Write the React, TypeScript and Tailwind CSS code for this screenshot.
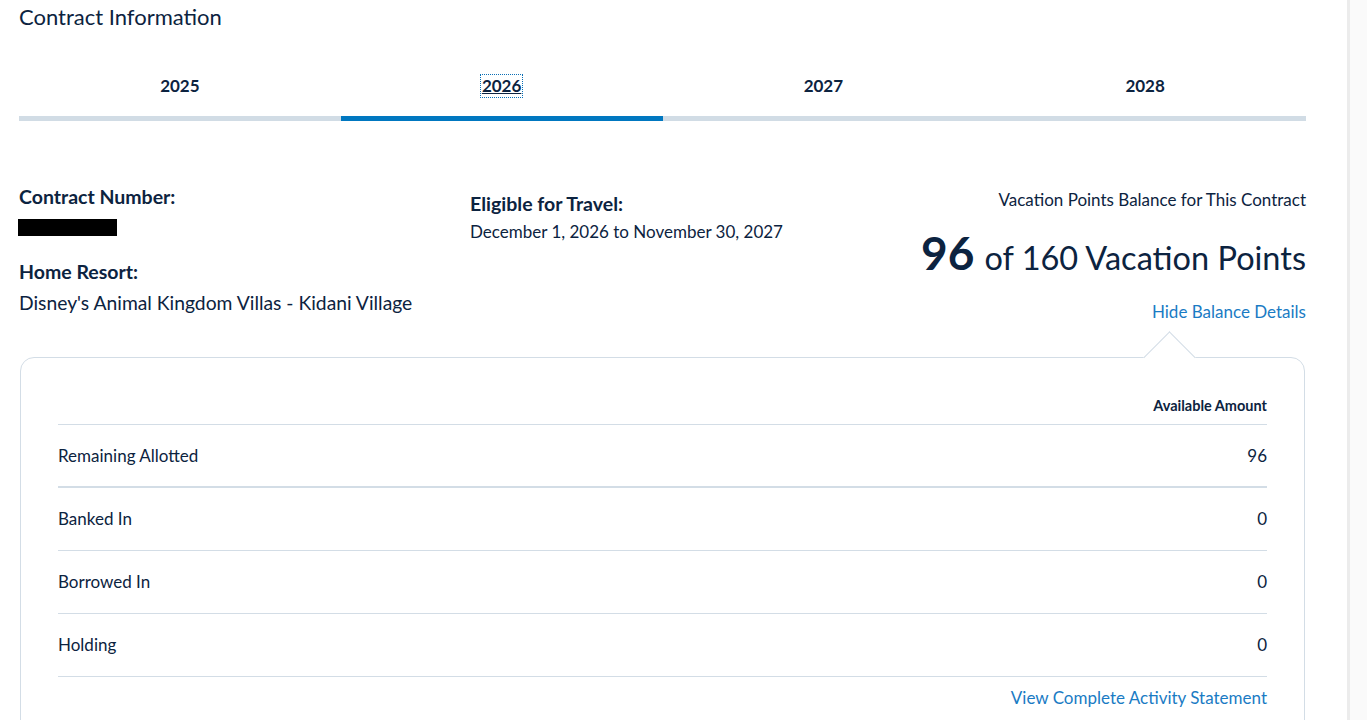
import React from 'react';

const YEARS = ['2025', '2026', '2027', '2028'];

const ROWS = [
    { label: 'Remaining Allotted', value: '96' },
    { label: 'Banked In', value: '0' },
    { label: 'Borrowed In', value: '0' },
    { label: 'Holding', value: '0' },
];

function YearTabs({ active }: { active: string }) {
    return (
        <div className="grid grid-cols-4 mt-[22px]">
            {YEARS.map((year) => {
                const isActive = year === active;
                return (
                    <div key={year} className="flex flex-col">
                        <div className="h-[60px] flex items-center justify-center">
                            <span
                                className={`text-[17px] font-bold leading-[22px] px-[1px] ${
                                    isActive ? 'underline outline-1 outline-dotted outline-[#0a6fb5]' : ''
                                }`}
                            >
                                {year}
                            </span>
                        </div>
                        <div className={`h-[5px] ${isActive ? 'bg-[#0077c0]' : 'bg-[#d1dce5]'}`} />
                    </div>
                );
            })}
        </div>
    );
}

function BalanceCard() {
    return (
        <div className="relative mt-[33px] mx-[1px] border border-[#d3dde6] rounded-[14px] bg-white px-[37px] pt-[38px] pb-[30px]">
            {/* pointer notch under "Hide Balance Details" */}
            <div className="absolute -top-[19px] right-[116px] w-[37px] h-[37px] rotate-45 bg-white border-t border-l border-[#d3dde6]" />
            <div className="relative flex justify-end pb-[8px] border-b border-[#d3dde6]">
                <span className="text-[14.5px] font-bold leading-[20px]">Available Amount</span>
            </div>
            {ROWS.map((row, i) => (
                <div
                    key={row.label}
                    className={`flex items-center justify-between h-[63px] border-[#d3dde6] ${
                        i === 0 ? 'border-b-2' : 'border-b'
                    }`}
                >
                    <span className="text-[17px]">{row.label}</span>
                    <span className="text-[17px]">{row.value}</span>
                </div>
            ))}
            <div className="flex justify-end pt-[9px]">
                <a className="text-[17px] text-[#1a7bc4] leading-[24px]">View Complete Activity Statement</a>
            </div>
        </div>
    );
}

export default function App() {
    return (
        <div
            className="min-h-[720px] bg-[#fafafa] flex text-[#0c2340]"
            style={{ fontFamily: 'Lato, "Noto Sans", sans-serif' }}
        >
            <div className="w-[1350px] bg-white border-r-[3px] border-[#ececec]">
                <div className="w-[1287px] ml-[19px]">
                    <h1 className="text-[22px] leading-[34px] font-normal">Contract Information</h1>

                    <YearTabs active="2026" />

                    <div className="flex mt-[63px]">
                        <div className="w-[451px] flex flex-col">
                            <span className="text-[19.5px] font-bold leading-[26px]">Contract Number:</span>
                            <div className="mt-[9px] -ml-[1px] w-[99px] h-[17px] bg-black" />
                            <span className="mt-[23px] text-[19.5px] font-bold leading-[26px]">Home Resort:</span>
                            <span className="mt-[5px] text-[19.3px] leading-[26px]">
                                Disney's Animal Kingdom Villas - Kidani Village
                            </span>
                        </div>
                        <div className="flex flex-col pt-[8px]">
                            <span className="text-[19.5px] font-bold leading-[24px]">Eligible for Travel:</span>
                            <span className="mt-[4px] text-[17px] leading-[24px]">
                                December 1, 2026 to November 30, 2027
                            </span>
                        </div>
                        <div className="flex-1 flex flex-col items-end pt-[5px]">
                            <span className="text-[17px] leading-[22px]">Vacation Points Balance for This Contract</span>
                            <div className="mt-[17px] flex items-baseline gap-[10px] leading-[50px]">
                                <span className="text-[46px] font-bold">96</span>
                                <span className="text-[32.5px]">of 160 Vacation Points</span>
                            </div>
                            <a className="mt-[17px] text-[17px] text-[#1a7bc4] leading-[24px]">Hide Balance Details</a>
                        </div>
                    </div>

                    <BalanceCard />
                </div>
            </div>
        </div>
    );
}
